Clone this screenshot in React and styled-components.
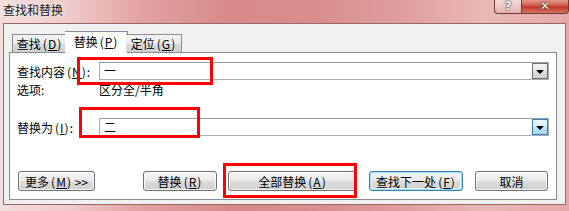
import React from "react";
import styled, { createGlobalStyle, css } from "styled-components";

const GlobalStyle = createGlobalStyle`
  html, body {
    margin: 0;
    padding: 0;
    background: #fff;
  }
  body {
    font-family: "Noto Sans CJK SC", "DejaVu Sans", sans-serif;
    font-size: 12px;
  }
`;

const Window = styled.div`
  position: relative;
  width: 569px;
  height: 211px;
  box-sizing: border-box;
  padding: 0 3px 6px 3px;
  display: flex;
  flex-direction: column;
  background: linear-gradient(
    90deg,
    #f3dede 0%,
    #efcaca 12%,
    #e2a2a2 25%,
    #d88a8a 40%,
    #d98d8d 55%,
    #df9d9d 70%,
    #eab8b8 85%,
    #e6a9a9 100%
  );
  overflow: hidden;
`;

const TitleBar = styled.div`
  height: 23px;
  display: flex;
  justify-content: space-between;
  align-items: flex-start;
`;

const Title = styled.div`
  padding-top: 3px;
  font-size: 12px;
  line-height: 14px;
  color: #1a1a1a;
  text-shadow: 0 0 6px rgba(255, 255, 255, 0.9);
`;

const Captions = styled.div`
  display: flex;
  margin-top: -1px;
  margin-right: -3px;
`;

const CaptionButton = styled.div`
  width: ${(p) => p.$w}px;
  height: 15px;
  box-sizing: border-box;
  border: 1px solid #6e3a3a;
  border-top: none;
  display: flex;
  align-items: center;
  justify-content: center;
  color: #fff;
  font-family: "DejaVu Sans", sans-serif;
  font-weight: bold;
  font-size: 12px;
  line-height: 12px;
  text-shadow: 0 0 1px #222, 0 0 2px #333;
  ${(p) =>
    p.$close
      ? css`
          background: linear-gradient(180deg, #e6a093 0%, #d0614f 45%, #c0392b 55%, #d5745f 100%);
          border-left: none;
          border-bottom-right-radius: 4px;
        `
      : css`
          background: linear-gradient(180deg, rgba(255, 255, 255, 0.55), rgba(230, 170, 170, 0.4));
          border-bottom-left-radius: 4px;
        `}
`;

const Client = styled.div`
  flex: 1;
  background: #f0f0f0;
  border: 1px solid #9b6666;
  box-sizing: border-box;
  padding: 7px 8px 4px 5px;
  display: flex;
  flex-direction: column;
`;

const TabStrip = styled.div`
  display: flex;
  align-items: flex-end;
  padding-left: 3px;
  height: 21px;
  position: relative;
  z-index: 1;
`;

const Tab = styled.div`
  box-sizing: border-box;
  width: ${(p) => p.$w}px;
  height: 18px;
  border: 1px solid #898c95;
  border-bottom: none;
  display: flex;
  align-items: center;
  justify-content: center;
  font-size: 12px;
  color: #000;
  background: linear-gradient(180deg, #f3f3f3 0%, #ebebeb 50%, #dcdcdc 51%, #cfcfcf 100%);
  ${(p) =>
    p.$active &&
    css`
      height: 22px;
      margin: 0 -2px -1px;
      background: #fff;
      padding-bottom: 2px;
    `}
  & + & {
    border-left: none;
  }
`;

const Panel = styled.div`
  flex: 1;
  background: #fff;
  border: 1px solid #898c95;
  padding: 9px 7px 8px 7px;
  display: flex;
  flex-direction: column;
`;

const Row = styled.div`
  display: flex;
  align-items: center;
  height: ${(p) => p.$h || 18}px;
  margin-top: ${(p) => p.$mt || 0}px;
`;

const Label = styled.div`
  width: 82px;
  flex-shrink: 0;
  font-size: 12px;
  color: #000;
  white-space: nowrap;
`;

const Value = styled.div`
  font-size: 12px;
  color: #000;
`;

const Combo = styled.div`
  flex: 1;
  height: 18px;
  box-sizing: border-box;
  border: 1px solid #abadb3;
  border-top-color: #9a9ca3;
  display: flex;
  align-items: center;
  justify-content: space-between;
  background: #fff;
`;

const ComboText = styled.div`
  padding-left: 4px;
  font-size: 12px;
  line-height: 14px;
`;

const DropButton = styled.div`
  width: 16px;
  height: 16px;
  box-sizing: border-box;
  display: flex;
  align-items: center;
  justify-content: center;
  ${(p) =>
    p.$hot
      ? css`
          border: 1px solid #3c7fb1;
          background: linear-gradient(180deg, #eaf6fd 0%, #d9f0fc 50%, #bee6fd 51%, #a7d9f5 100%);
        `
      : css`
          border: 1px solid #707070;
          background: linear-gradient(180deg, #f2f2f2 0%, #ebebeb 50%, #dddddd 51%, #cfcfcf 100%);
        `}
`;

const Arrow = styled.div`
  width: 0;
  height: 0;
  border-left: 4px solid transparent;
  border-right: 4px solid transparent;
  border-top: 4px solid #000;
  margin-top: 2px;
`;

const ButtonRow = styled.div`
  display: flex;
  align-items: center;
  margin-top: auto;
  padding: 0 1px;
`;

const Spacer = styled.div`
  flex: 1;
`;

const Button = styled.div`
  width: ${(p) => p.$w}px;
  height: 20px;
  box-sizing: border-box;
  margin-left: ${(p) => p.$ml || 0}px;
  border: 1px solid #707070;
  border-radius: 3px;
  background: linear-gradient(180deg, #f2f2f2 0%, #ebebeb 50%, #dddddd 51%, #cfcfcf 100%);
  display: flex;
  align-items: center;
  justify-content: center;
  font-size: 12px;
  color: #000;
  box-shadow: inset 0 0 0 1px rgba(255, 255, 255, 0.8);
  ${(p) =>
    p.$default &&
    css`
      border-color: #3c7fb1;
      box-shadow: inset 0 0 0 1px #9ee0fb, inset 0 0 0 2px #e6f6fd;
    `}
`;

const Mnemonic = styled.span`
  margin-left: 2px;
  letter-spacing: 1px;
`;

const Key = styled.span`
  text-decoration: underline;
`;

const Mark = styled.div`
  position: absolute;
  left: ${(p) => p.$x}px;
  top: ${(p) => p.$y}px;
  width: ${(p) => p.$w}px;
  height: ${(p) => p.$h}px;
  box-sizing: border-box;
  border: 3px solid #ff0000;
  pointer-events: none;
`;

const Mn = ({ k }) => (
  <Mnemonic>
    (<Key>{k}</Key>)
  </Mnemonic>
);

export default function App() {
  return (
    <>
      <GlobalStyle />
      <Window>
        <TitleBar>
          <Title>查找和替换</Title>
          <Captions>
            <CaptionButton $w={28}>?</CaptionButton>
            <CaptionButton $w={47} $close>
              ✕
            </CaptionButton>
          </Captions>
        </TitleBar>
        <Client>
          <TabStrip>
            <Tab $w={55}>
              查找<Mn k="D" />
            </Tab>
            <Tab $w={63} $active>
              替换<Mn k="P" />
            </Tab>
            <Tab $w={56}>
              定位<Mn k="G" />
            </Tab>
          </TabStrip>
          <Panel>
            <Row>
              <Label>
                查找内容<Mn k="N" />:
              </Label>
              <Combo>
                <ComboText>一</ComboText>
                <DropButton>
                  <Arrow />
                </DropButton>
              </Combo>
            </Row>
            <Row $h={16} $mt={1}>
              <Label>选项:</Label>
              <Value>区分全/半角</Value>
            </Row>
            <Row $mt={21}>
              <Label>
                替换为<Mn k="I" />:
              </Label>
              <Combo>
                <ComboText>二</ComboText>
                <DropButton $hot>
                  <Arrow />
                </DropButton>
              </Combo>
            </Row>
            <ButtonRow>
              <Button $w={77}>
                更多<Mn k="M" />&nbsp;&gt;&gt;
              </Button>
              <Spacer />
              <Button $w={74}>
                替换<Mn k="R" />
              </Button>
              <Button $w={129} $ml={11}>
                全部替换<Mn k="A" />
              </Button>
              <Button $w={94} $ml={12} $default>
                查找下一处<Mn k="F" />
              </Button>
              <Button $w={73} $ml={12}>
                取消
              </Button>
            </ButtonRow>
          </Panel>
        </Client>
        <Mark $x={77} $y={57} $w={136} $h={28} />
        <Mark $x={79} $y={107} $w={121} $h={31} />
        <Mark $x={223} $y={163} $w={134} $h={35} />
      </Window>
    </>
  );
}
